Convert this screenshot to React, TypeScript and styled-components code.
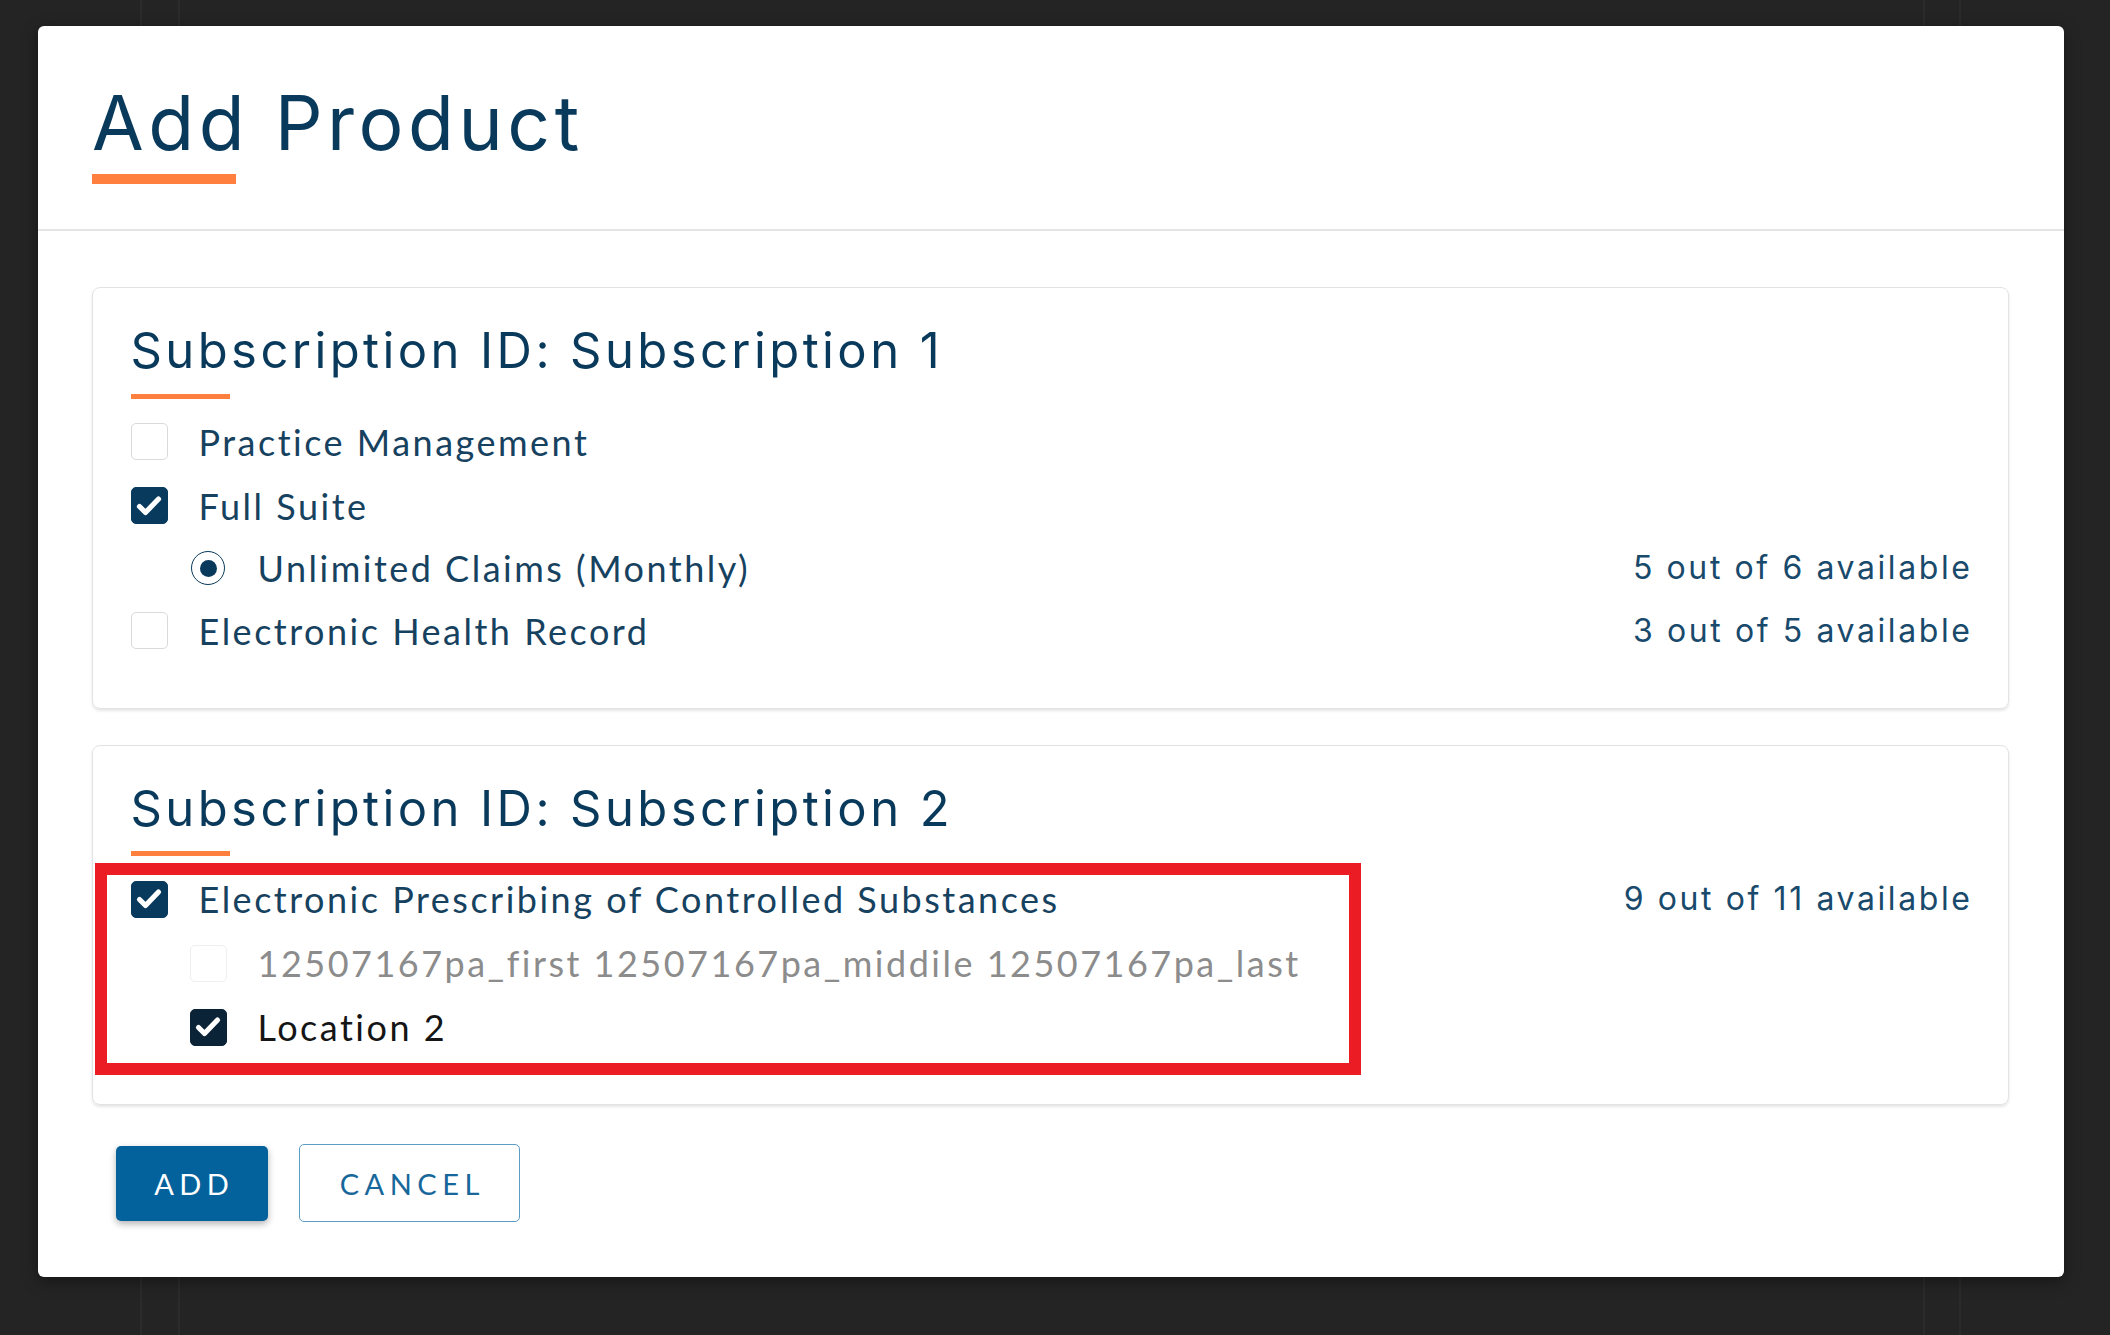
import React from 'react';
import styled, { createGlobalStyle } from 'styled-components';

const navy = '#0a3a5b';
const orange = '#ff7f3f';

const GlobalStyle = createGlobalStyle`
  html, body {
    margin: 0;
    padding: 0;
  }
  body {
    width: 2110px;
    height: 1335px;
    overflow: hidden;
    background-color: #242424;
    background-image:
      linear-gradient(to right, transparent 140px, #2b2b2b 140px, #2b2b2b 142px, transparent 142px),
      linear-gradient(to right, transparent 178px, #2b2b2b 178px, #2b2b2b 180px, transparent 180px),
      linear-gradient(to right, transparent 1923px, #2b2b2b 1923px, #2b2b2b 1925px, transparent 1925px),
      linear-gradient(to right, transparent 1959px, #2b2b2b 1959px, #2b2b2b 1961px, transparent 1961px);
  }
`;

const Backdrop = styled.div`
  box-sizing: border-box;
  width: 2110px;
  height: 1335px;
  padding: 26px 46px 0 38px;
`;

const Modal = styled.div`
  background: #fff;
  border-radius: 6px;
  width: 2026px;
  box-shadow: 0 4px 16px rgba(0, 0, 0, 0.4);
`;

const Header = styled.header`
  padding: 58.5px 54px 45px;
  border-bottom: 2px solid #e4e4e4;
`;

const Title = styled.h1`
  margin: 0;
  font-family: Inter, 'Liberation Sans', sans-serif;
  font-weight: 400;
  font-size: 75px;
  line-height: 75px;
  letter-spacing: 4.5px;
  color: ${navy};
`;

const Accent = styled.div<{ $width: number; $height: number; $gap: number }>`
  width: ${({ $width }) => $width}px;
  height: ${({ $height }) => $height}px;
  margin-top: ${({ $gap }) => $gap}px;
  background: ${orange};
`;

const Body = styled.div`
  padding: 56px 55px 54.5px 53.5px;
`;

const Card = styled.section`
  position: relative;
  border: 1.5px solid #e3e3e3;
  border-radius: 8px;
  box-shadow: 0 2px 3px rgba(0, 0, 0, 0.1);
  padding: 33px 38px 45px;

  & + & {
    margin-top: 36px;
  }
`;

const CardTitle = styled.h2`
  margin: 0;
  font-family: Inter, 'Liberation Sans', sans-serif;
  font-weight: 400;
  font-size: 49px;
  line-height: 60px;
  letter-spacing: 3.4px;
  color: ${navy};
`;

const List = styled.div`
  margin-top: 11px;
`;

const Row = styled.div<{ $indent: boolean; $compact: boolean }>`
  display: flex;
  align-items: center;
  height: ${({ $compact }) => ($compact ? '61px' : '64px')};
  padding-left: ${({ $indent }) => ($indent ? '59px' : '0')};
`;

const Slot = styled.div`
  width: 37px;
  height: 37px;
  display: flex;
  align-items: center;
  justify-content: center;
  margin-right: 31px;
  flex-shrink: 0;
`;

const Box = styled.span<{ $checked: boolean; $disabled: boolean; $dark: boolean }>`
  box-sizing: border-box;
  width: 37px;
  height: 37px;
  border-radius: 5px;
  display: flex;
  align-items: center;
  justify-content: center;
  background: ${({ $checked, $dark }) => ($checked ? ($dark ? '#0b2336' : '#073a5d') : '#fff')};
  border: 1.5px solid
    ${({ $checked, $disabled, $dark }) =>
      $checked ? ($dark ? '#0b2336' : '#073a5d') : $disabled ? '#efefef' : '#dadada'};
`;

const Radio = styled.span`
  box-sizing: border-box;
  width: 34px;
  height: 34px;
  border-radius: 50%;
  border: 1.5px solid ${navy};
  display: flex;
  align-items: center;
  justify-content: center;

  &::after {
    content: '';
    width: 17px;
    height: 17px;
    border-radius: 50%;
    background: ${navy};
  }
`;

const Label = styled.span<{ $tone: 'normal' | 'muted' | 'dark' }>`
  flex: 1;
  font-family: Lato, 'Liberation Sans', sans-serif;
  font-size: 36px;
  line-height: 1;
  letter-spacing: 2.5px;
  white-space: nowrap;
  color: ${({ $tone }) => ($tone === 'muted' ? '#8c8c8c' : $tone === 'dark' ? '#151515' : '#17425f')};
`;

const Available = styled.span`
  font-family: Inter, 'Liberation Sans', sans-serif;
  font-size: 32px;
  line-height: 1;
  letter-spacing: 2.6px;
  margin-right: -2.6px;
  color: #194a6b;
  white-space: nowrap;
`;

const Highlight = styled.div`
  position: absolute;
  left: 2px;
  top: 117.5px;
  width: 1266px;
  height: 212px;
  box-sizing: border-box;
  border: 12px solid #ec1c24;
  pointer-events: none;
`;

const Actions = styled.div`
  display: flex;
  align-items: center;
  gap: 31.5px;
  margin-top: 39px;
  padding-left: 24px;
`;

const Button = styled.button<{ $primary?: boolean }>`
  box-sizing: border-box;
  display: flex;
  align-items: center;
  justify-content: center;
  width: ${({ $primary }) => ($primary ? '152px' : '221px')};
  height: ${({ $primary }) => ($primary ? '75px' : '78px')};
  padding: 0 0 0 5.5px;
  border-radius: 5px;
  font-family: Lato, 'Liberation Sans', sans-serif;
  font-size: 29px;
  letter-spacing: 5.5px;
  cursor: pointer;
  background: ${({ $primary }) => ($primary ? '#03629c' : '#fff')};
  color: ${({ $primary }) => ($primary ? '#fff' : '#17679b')};
  border: ${({ $primary }) => ($primary ? 'none' : '1.5px solid #5d9cc5')};
  box-shadow: ${({ $primary }) => ($primary ? '0 3px 7px rgba(0, 0, 0, 0.3)' : 'none')};
`;

const Check = () => (
  <svg width="30" height="30" viewBox="0 0 30 30">
    <path d="M5.5 15.5l6 6 13-13.5" fill="none" stroke="#fff" strokeWidth="5.2" strokeLinecap="round" strokeLinejoin="round" />
  </svg>
);

type Item = {
  label: string;
  control: 'checkbox' | 'radio';
  checked?: boolean;
  disabled?: boolean;
  dark?: boolean;
  indent?: boolean;
  available?: string;
};

const subscriptions: { id: string; items: Item[]; highlight?: boolean }[] = [
  {
    id: 'Subscription 1',
    items: [
      { label: 'Practice Management', control: 'checkbox' },
      { label: 'Full Suite', control: 'checkbox', checked: true },
      { label: 'Unlimited Claims (Monthly)', control: 'radio', indent: true, available: '5 out of 6 available' },
      { label: 'Electronic Health Record', control: 'checkbox', available: '3 out of 5 available' },
    ],
  },
  {
    id: 'Subscription 2',
    highlight: true,
    items: [
      {
        label: 'Electronic Prescribing of Controlled Substances',
        control: 'checkbox',
        checked: true,
        available: '9 out of 11 available',
      },
      {
        label: '12507167pa_first 12507167pa_middile 12507167pa_last',
        control: 'checkbox',
        disabled: true,
        indent: true,
      },
      { label: 'Location 2', control: 'checkbox', checked: true, dark: true, indent: true },
    ],
  },
];

const ProductRow = ({ item }: { item: Item }) => (
  <Row $indent={!!item.indent} $compact={item.control === 'radio'}>
    <Slot>
      {item.control === 'radio' ? (
        <Radio />
      ) : (
        <Box $checked={!!item.checked} $disabled={!!item.disabled} $dark={!!item.dark}>
          {item.checked && <Check />}
        </Box>
      )}
    </Slot>
    <Label $tone={item.disabled ? 'muted' : item.dark ? 'dark' : 'normal'}>{item.label}</Label>
    {item.available && <Available>{item.available}</Available>}
  </Row>
);

const App = () => (
  <>
    <GlobalStyle />
    <Backdrop>
      <Modal>
        <Header>
          <Title>Add Product</Title>
          <Accent $width={144} $height={10} $gap={14.8} />
        </Header>
        <Body>
          {subscriptions.map((sub) => (
            <Card key={sub.id}>
              <CardTitle>Subscription ID: {sub.id}</CardTitle>
              <Accent $width={99} $height={5} $gap={12.5} />
              <List>
                {sub.items.map((item) => (
                  <ProductRow key={item.label} item={item} />
                ))}
              </List>
              {sub.highlight && <Highlight />}
            </Card>
          ))}
          <Actions>
            <Button $primary>ADD</Button>
            <Button>CANCEL</Button>
          </Actions>
        </Body>
      </Modal>
    </Backdrop>
  </>
);

export default App;
